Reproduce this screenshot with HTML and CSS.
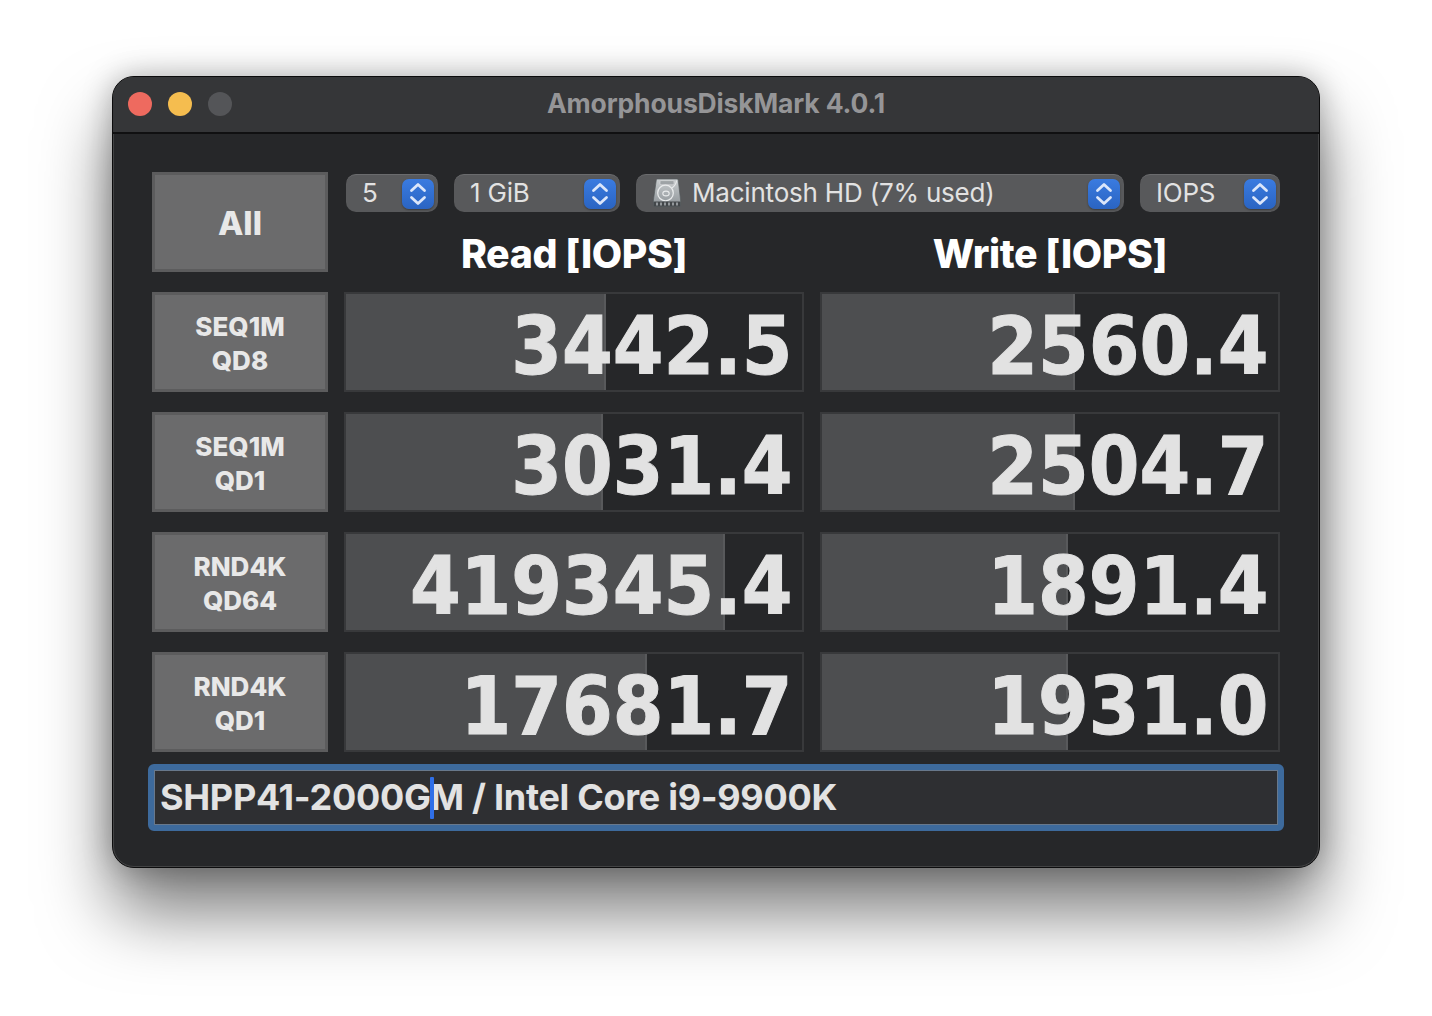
FILE: index.html
```html
<!DOCTYPE html>
<html lang="en">
<head>
<meta charset="utf-8">
<title>AmorphousDiskMark</title>
<link rel="stylesheet" href="styles.css">
</head>
<body>
<svg class="defs" width="0" height="0" aria-hidden="true">
  <symbol id="chev" viewBox="0 0 32 30">
    <path d="M9.5 11.5 L16 5.5 L22.5 11.5 M9.5 18.5 L16 24.5 L22.5 18.5" fill="none" stroke="#dbe6fa" stroke-width="2.8" stroke-linecap="round" stroke-linejoin="round"/>
  </symbol>
</svg>
<main class="window">
  <header class="titlebar">
    <div class="lights">
      <span class="light red"></span>
      <span class="light yellow"></span>
      <span class="light grey"></span>
    </div>
    <div class="title">AmorphousDiskMark 4.0.1</div>
  </header>
  <div class="content">
    <div class="grid">
      <button class="tile tile-all">All</button>
      <div class="head">
        <div class="selects">
          <div class="select s-count"><span class="sel-text">5</span><span class="stepper"><svg width="32" height="30"><use href="#chev"/></svg></span></div>
          <div class="select s-size"><span class="sel-text">1 GiB</span><span class="stepper"><svg width="32" height="30"><use href="#chev"/></svg></span></div>
          <div class="select s-disk">
            <svg class="disk" width="30" height="30" viewBox="0 0 30 30">
              <defs>
                <linearGradient id="dg" x1="0" y1="0" x2="0" y2="1">
                  <stop offset="0" stop-color="#c9cdcf"/>
                  <stop offset="1" stop-color="#8d9397"/>
                </linearGradient>
              </defs>
              <path d="M5.5 1 H25 Q26 1 26.2 2 L28.6 22 V27 Q28.6 28.6 27 28.6 H3 Q1.4 28.6 1.4 27 V22 L4.3 2 Q4.5 1 5.5 1 Z" fill="url(#dg)" stroke="#555a5d" stroke-width=".7"/>
              <rect x="8" y="2.6" width="14" height="4.2" rx="1" fill="#9ea3a6" stroke="#e0e3e4" stroke-width=".6"/>
              <circle cx="13.5" cy="15" r="7.8" fill="none" stroke="#e8eaeb" stroke-width="1.3"/>
              <ellipse cx="14" cy="15.5" rx="3.2" ry="2.4" fill="none" stroke="#e8eaeb" stroke-width="1.1"/>
              <path d="M20 10 Q24 7 24.6 2.5" fill="none" stroke="#e8eaeb" stroke-width="1.2"/>
              <rect x="1.6" y="23.4" width="26.8" height="5" rx="1" fill="#43474a"/>
              <path d="M5 24.5 V27.5 M9 24.5 V27.5 M13 24.5 V27.5 M17 24.5 V27.5 M21 24.5 V27.5 M25 24.5 V27.5" stroke="#a8adb0" stroke-width="1.6"/>
            </svg>
            <span class="sel-text">Macintosh HD (7% used)</span><span class="stepper"><svg width="32" height="30"><use href="#chev"/></svg></span>
          </div>
          <div class="select s-unit"><span class="sel-text">IOPS</span><span class="stepper"><svg width="32" height="30"><use href="#chev"/></svg></span></div>
        </div>
        <div class="heads">
          <div class="heading">Read [IOPS]</div>
          <div class="heading">Write [IOPS]</div>
        </div>
      </div>

      <button class="tile">SEQ1M<br>QD8</button>
      <div class="cell"><div class="bar" style="width:260px"></div><span class="val">3442.5</span></div>
      <div class="cell"><div class="bar" style="width:253px"></div><span class="val">2560.4</span></div>

      <button class="tile">SEQ1M<br>QD1</button>
      <div class="cell"><div class="bar" style="width:257px"></div><span class="val">3031.4</span></div>
      <div class="cell"><div class="bar" style="width:253px"></div><span class="val">2504.7</span></div>

      <button class="tile">RND4K<br>QD64</button>
      <div class="cell"><div class="bar" style="width:379px"></div><span class="val">419345.4</span></div>
      <div class="cell"><div class="bar" style="width:246px"></div><span class="val">1891.4</span></div>

      <button class="tile">RND4K<br>QD1</button>
      <div class="cell"><div class="bar" style="width:301px"></div><span class="val">17681.7</span></div>
      <div class="cell"><div class="bar" style="width:246px"></div><span class="val">1931.0</span></div>
    </div>
    <div class="comment"><span>SHPP41-2000G</span><i class="caret"></i><span>M / Intel Core i9-9900K</span></div>
  </div>
</main>
</body>
</html>
```
FILE: styles.css
```css
* { box-sizing: border-box; }
html, body { margin: 0; height: 100%; }
body {
  background: #fff;
  padding: 76px 112px 0;
  overflow: hidden;
  font-family: Inter, "Liberation Sans", sans-serif;
}
.defs { position: absolute; }
.window {
  width: 1208px;
  height: 792px;
  background: #262729;
  border-radius: 22px;
  border: 1px solid #0c0c0d;
  outline: 1px solid rgba(120,120,120,.35);
  outline-offset: -2px;
  box-shadow: 0 44px 70px rgba(0,0,0,.52), 0 0 30px rgba(0,0,0,.28);
  overflow: hidden;
  display: flex;
  flex-direction: column;
}
.titlebar {
  height: 57px;
  flex: none;
  background: #353638;
  border-bottom: 2px solid #101011;
  display: flex;
  align-items: center;
  justify-content: center;
  position: relative;
}
.lights {
  position: absolute;
  left: 15px;
  top: 15px;
  display: flex;
  gap: 16px;
}
.light { width: 24px; height: 24px; border-radius: 50%; }
.red { background: #ee6a5f; }
.yellow { background: #f5bd4f; }
.grey { background: #545558; }
.title {
  font-size: 26.5px;
  font-weight: 700;
  color: #959597;
  margin-top: -4px;
  letter-spacing: -.15px;
}
.content {
  padding: 38px 39px 0;
  display: flex;
  flex-direction: column;
}
.grid {
  display: grid;
  grid-template-columns: 176px 460px 460px;
  grid-template-rows: repeat(5, 100px);
  column-gap: 16px;
  row-gap: 20px;
}
.tile {
  border: 3px solid #5c5c5d;
  background: #6b6b6c;
  color: #e8e8e8;
  font-family: inherit;
  font-size: 26px;
  font-weight: 800;
  line-height: 34px;
  padding: 4px 0 0;
  margin: 0;
}
.tile-all { font-size: 33px; padding: 2px 0 0; }
.head {
  grid-column: 2 / 4;
  display: flex;
  flex-direction: column;
}
.selects {
  display: flex;
  gap: 16px;
  margin: 2px 0 0 2px;
  height: 38px;
}
.select {
  height: 38px;
  border-radius: 10px;
  background: #58595b;
  border-top: 1px solid #6a6b6d;
  display: flex;
  align-items: center;
  color: #e2e2e2;
  font-size: 26px;
  letter-spacing: -.2px;
  padding-left: 16px;
  padding-right: 4px;
}
.s-count { width: 92px; padding-left: 16px; }
.s-size { width: 166px; }
.s-disk { width: 488px; padding-left: 16px; }
.s-unit { width: 140px; }
.sel-text { flex: 1; white-space: nowrap; margin-top: -3px; }
.disk { flex: none; margin-right: 10px; margin-top: -2px; }
.stepper {
  flex: none;
  width: 32px;
  height: 30px;
  border-radius: 7px;
  background: linear-gradient(#3a7be0, #2a64c2);
  box-shadow: 0 1px 2px rgba(0,0,0,.35);
  display: block;
}
.stepper svg { display: block; }
.heads {
  display: grid;
  grid-template-columns: 460px 460px;
  column-gap: 16px;
  margin-top: 19px;
}
.heading {
  text-align: center;
  font-size: 39.3px;
  line-height: 46px;
  font-weight: 800;
  color: #fff;
  letter-spacing: -.4px;
}
.cell {
  position: relative;
  border: 2px solid #38393b;
  display: flex;
  align-items: center;
  justify-content: flex-end;
  padding-right: 9.5px;
}
.bar {
  position: absolute;
  left: 0;
  top: 0;
  bottom: 0;
  background: #4d4e50;
  border-right: 2px solid #58595b;
}
.val {
  position: relative;
  font-family: "DejaVu Sans", sans-serif;
  font-stretch: condensed;
  font-weight: 700;
  font-size: 81px;
  line-height: 1;
  color: #e2e2e2;
  -webkit-text-stroke: 1px #e2e2e2;
  margin-top: 8px;
}
.comment {
  margin: 12px 0 0 -4px;
  width: 1136px;
  height: 67px;
  border: 6px solid #3d6a9c;
  border-radius: 6px;
  box-shadow: inset 0 0 0 1px #68788b;
  background: #2e2f32;
  display: flex;
  align-items: center;
  padding: 0 0 2px 6px;
  color: #e2e2e2;
  font-size: 36px;
  font-weight: 700;
  letter-spacing: -.3px;
  white-space: pre;
}
.caret {
  display: block;
  width: 4px;
  height: 42px;
  margin: 2px -3px 0 -1px;
  background: #2f6fe8;
  border-radius: 1px;
  position: relative;
  z-index: 1;
}
```
